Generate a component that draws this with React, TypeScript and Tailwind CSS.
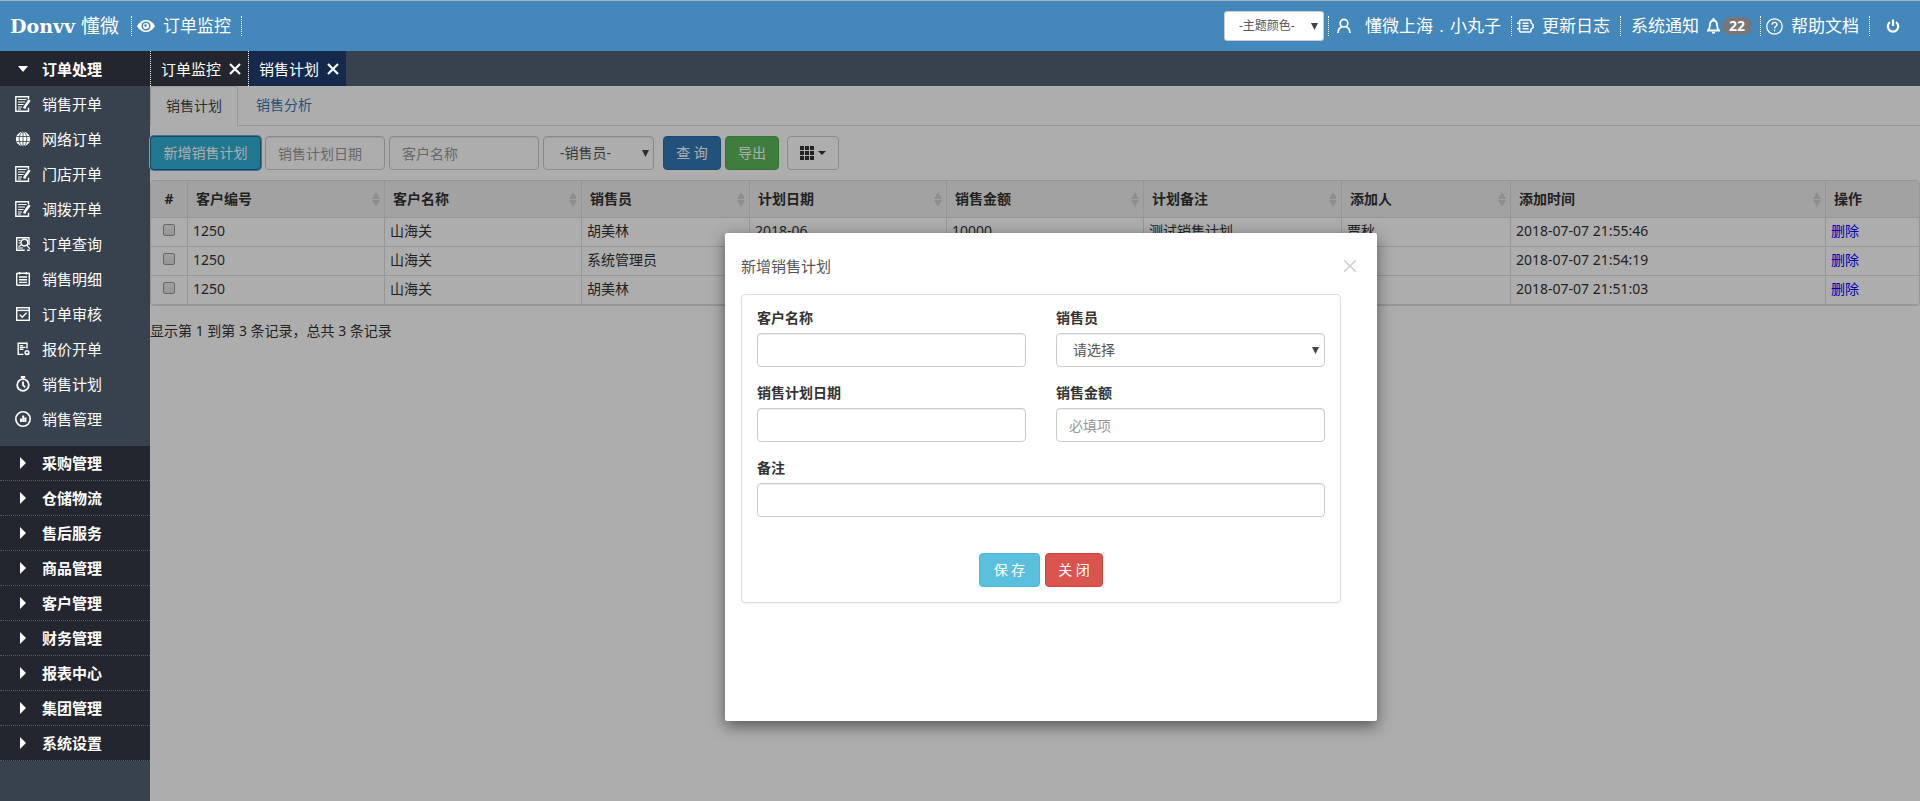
import { useState } from "react";
import type { ReactNode } from "react";
import clsx from "clsx";

type IconName =
  | "edit"
  | "globe"
  | "search"
  | "list"
  | "check"
  | "quote"
  | "timer"
  | "chart";

const MENU: { icon: IconName; label: string }[] = [
  { icon: "edit", label: "销售开单" },
  { icon: "globe", label: "网络订单" },
  { icon: "edit", label: "门店开单" },
  { icon: "edit", label: "调拨开单" },
  { icon: "search", label: "订单查询" },
  { icon: "list", label: "销售明细" },
  { icon: "check", label: "订单审核" },
  { icon: "quote", label: "报价开单" },
  { icon: "timer", label: "销售计划" },
  { icon: "chart", label: "销售管理" },
];

const GROUPS = [
  "采购管理",
  "仓储物流",
  "售后服务",
  "商品管理",
  "客户管理",
  "财务管理",
  "报表中心",
  "集团管理",
  "系统设置",
];

const COLUMNS = [
  { title: "客户编号", width: "w-[197px]" },
  { title: "客户名称", width: "w-[197px]" },
  { title: "销售员", width: "w-[168px]" },
  { title: "计划日期", width: "w-[197px]" },
  { title: "销售金额", width: "w-[197px]" },
  { title: "计划备注", width: "w-[198px]" },
  { title: "添加人", width: "w-[169px]" },
  { title: "添加时间", width: "" },
];

const ROWS = [
  ["1250", "山海关", "胡美林", "2018-06", "10000", "测试销售计划", "贾秋", "2018-07-07 21:55:46"],
  ["1250", "山海关", "系统管理员", "", "", "", "", "2018-07-07 21:54:19"],
  ["1250", "山海关", "胡美林", "", "", "", "", "2018-07-07 21:51:03"],
];

const inputClass =
  "h-[34px] rounded border border-[#ccc] bg-white px-3 text-sm text-[#555] shadow-[inset_0_1px_1px_rgba(0,0,0,0.075)] outline-none placeholder:text-[#999]";

function MenuIcon({ name }: { name: IconName }) {
  const line = { fill: "none", stroke: "currentColor", strokeWidth: 1.4 };
  return (
    <svg width="16" height="16" viewBox="0 0 16 16" className="shrink-0">
      {name === "edit" && (
        <g {...line}>
          <path d="M13.500 3V.8H.8v14.400h12.700v-3.400" />
          <path d="M3 3.500h8.500M3 6h7M3 8.500h5.500M3 11h4M3 13h3" strokeWidth="1.100" />
          <path d="M14.600 4 10 10.600l-.8 2" strokeWidth="2.600" />
        </g>
      )}
      {name === "globe" && (
        <g fill="none" stroke="#37424e" strokeWidth="0.8">
          <circle cx="8" cy="8" r="7.200" fill="#fff" stroke="none" />
          <path d="M8 1v14M1.500 5.500h13M1.500 10.500h13" />
          <ellipse cx="8" cy="8" rx="3.800" ry="7.200" />
        </g>
      )}
      {name === "search" && (
        <g {...line}>
          <path d="M14 9V1.700H1.700v12.600h8M12 14.300h2.800" />
          <circle cx="9.400" cy="6.600" r="3.400" />
          <path d="m11.800 9.200 3 3.600M3.600 4.400h2M3.600 7h2M3.600 10.600 6 9.200M3 12h5" strokeWidth="1.200" />
        </g>
      )}
      {name === "list" && (
        <g {...line}>
          <rect x="1.700" y="2.200" width="12.600" height="12.100" rx=".6" />
          <path d="M4.600 1v2.400M11.400 1v2.400" />
          <path d="M4 6h8M4 8.700h8M4 11.400h8" />
        </g>
      )}
      {name === "check" && (
        <g {...line}>
          <rect x="1.700" y="1.700" width="12.600" height="12.600" />
          <path d="M1.700 4.400h12.600" />
          <path d="m4.800 8.600 2.400 2.600 4.400-4.400" />
        </g>
      )}
      {name === "quote" && (
        <g {...line}>
          <path d="M12 7.400V2.200H3.200v11.200h5.200" />
          <path d="M4.800 4.600h3.400M4.800 6.400h5.800M4.800 8.200h3.600" />
          <circle cx="12" cy="11.600" r="1.900" />
          <path d="M10.600 13.200h3.600" />
        </g>
      )}
      {name === "timer" && (
        <g {...line} strokeWidth="1.800">
          <circle cx="8" cy="9" r="5.800" />
          <path d="M5.800 1h4.400M8 1v2.400M8 5.400V9l2.200 2.400" />
        </g>
      )}
      {name === "chart" && (
        <g {...line} strokeWidth="1.600">
          <circle cx="8" cy="8" r="7.200" />
          <path d="M6 7.400V11M8.200 4.600V11M10.400 6.600V11" strokeWidth="2" />
        </g>
      )}
    </svg>
  );
}

function Arrow({ className }: { className: string }) {
  return (
    <svg width="7" height="7" viewBox="0 0 7 7" className={clsx("pointer-events-none absolute", className)}>
      <path d="M0 0h7L3.500 7z" fill="#444" />
    </svg>
  );
}

function CloseMark({ size, width }: { size: number; width: number }) {
  return (
    <svg width={size} height={size} viewBox="0 0 12 12" fill="none" stroke="currentColor" strokeWidth={width}>
      <path d="m1 1 10 10M11 1 1 11" />
    </svg>
  );
}

function Divider() {
  return <span className="h-5 border-l border-dotted border-white" />;
}

function Header() {
  return (
    <header className="flex h-[51px] shrink-0 items-center border-t border-[#a9b0b6] bg-[#4487bb] text-[17px] leading-5 whitespace-nowrap text-white">
      <a href="#" className="flex items-center gap-[6px] pr-3 pl-[10px]">
        <span className="font-['DejaVu_Serif',serif] text-[19px] leading-5 font-bold">Donvv</span>
        <span className="text-[19px]">懂微</span>
      </a>
      <Divider />
      <a href="#" className="flex items-center gap-2 pr-[10px] pl-[5px]">
        <svg width="18" height="14" viewBox="0 0 18 14">
          <path d="M0 7C2.500 2.800 5.500 1 9 1s6.500 1.800 9 6c-2.500 4.200-5.500 6-9 6S2.500 11.200 0 7z" fill="#fff" />
          <circle cx="9" cy="7" r="3.800" fill="none" stroke="#4487bb" strokeWidth="1.500" />
          <circle cx="8.500" cy="6.500" r="1.200" fill="#4487bb" />
        </svg>
        订单监控
      </a>
      <Divider />

      <div className="relative ml-auto">
        <select
          aria-label="主题颜色"
          className="block h-[30px] w-[100px] appearance-none rounded-[3px] border border-[#ccc] bg-white pl-[14px] text-xs text-[#555] outline-none"
        >
          <option>-主题颜色-</option>
        </select>
        <Arrow className="top-3 right-[6px]" />
      </div>
      <span className="w-1" />
      <Divider />
      <a href="#" className="flex items-center gap-[14px] pr-[10px] pl-2">
        <svg width="14" height="16" viewBox="0 0 14 16" fill="none" stroke="currentColor" strokeWidth="1.700">
          <circle cx="7" cy="5.200" r="3.800" />
          <path d="M1 15c.2-3.400 1.700-5.600 4-6.400M13 15c-.2-3.400-1.700-5.600-4-6.400" />
        </svg>
        懂微上海﹒小丸子
      </a>
      <Divider />
      <a href="#" className="flex items-center gap-2 pr-[10px] pl-[5px]">
        <svg width="17" height="16" viewBox="0 0 17 16" fill="none" stroke="currentColor" strokeWidth="1.500">
          <path d="M2.500 5V3.200c0-.8.500-1.200 1.200-1.200h9.100c.7 0 1.200.4 1.200 1.200V5M2.500 11v1.800c0 .8.500 1.200 1.200 1.200h9.100c.7 0 1.200-.4 1.200-1.200V11" />
          <path d="M5.500 5.200h6M5.500 8h6M5.500 10.800h6M0 5.200h3.500M0 10.800h3.500M2.500 6v4M14 5l2 1.500v3L14 11" />
        </svg>
        更新日志
      </a>
      <Divider />
      <a href="#" className="flex items-center pr-2 pl-[10px]">
        系统通知
        <svg width="13" height="16" viewBox="0 0 13 16" fill="none" stroke="currentColor" strokeWidth="1.800" className="mr-[2px] ml-2">
          <path d="M1 12.500c1.300-1 1.700-2.200 1.900-5C3 4.200 4.400 2.500 6.500 2.500s3.500 1.700 3.600 5c.2 2.800.6 4 1.900 5z" />
          <path d="M6.500 0v2.500M5 14.700h3" />
        </svg>
        <span className="h-[18px] rounded-full bg-[#777] px-[7px] font-['Open_Sans',sans-serif] text-sm leading-[18px] font-bold">22</span>
      </a>
      <Divider />
      <a href="#" className="flex items-center gap-2 pr-[10px] pl-[5px]">
        <svg width="17" height="17" viewBox="0 0 17 17" fill="none" stroke="currentColor" strokeWidth="1.300">
          <circle cx="8.500" cy="8.500" r="7.700" />
          <path d="M6 6.800c0-1.600 1-2.500 2.500-2.500s2.500.9 2.500 2.200c0 1.800-2.400 1.900-2.400 4M8.600 11.800v1.500" />
        </svg>
        帮助文档
      </a>
      <Divider />
      <button type="button" aria-label="退出" className="pr-5 pl-4">
        <svg width="14" height="14" viewBox="0 0 14 14" fill="none" stroke="currentColor" strokeWidth="2.200">
          <path d="M4 3.200a5.200 5.200 0 1 0 6 0M7 .5v6.500" />
        </svg>
      </button>
    </header>
  );
}

function Sidebar() {
  return (
    <nav className="w-[150px] shrink-0 bg-[#37424e] text-[15px] leading-5 text-white">
      <button type="button" className="flex h-[35px] w-full items-center bg-[#23262e] pl-[18px] font-bold">
        <svg width="10" height="6" viewBox="0 0 10 6" className="mr-[14px]">
          <path d="M0 0h10L5 6z" fill="#fff" />
        </svg>
        订单处理
      </button>
      <ul className="pb-[10px]">
        {MENU.map((item) => (
          <li key={item.label}>
            <a href="#" className="flex h-[35px] items-center gap-[11px] pl-[15px]">
              <MenuIcon name={item.icon} />
              {item.label}
            </a>
          </li>
        ))}
      </ul>
      {GROUPS.map((label) => (
        <button
          key={label}
          type="button"
          className="flex h-[35px] w-full items-center border-b border-dotted border-[#555a63] bg-[#23262e] pl-5 font-bold"
        >
          <svg width="6" height="12" viewBox="0 0 6 12" className="mr-4">
            <path d="M0 0l6 6-6 6z" fill="#fff" />
          </svg>
          {label}
        </button>
      ))}
    </nav>
  );
}

function PageTab({ label, active }: { label: string; active?: boolean }) {
  return (
    <div
      className={clsx(
        "flex w-[98px] items-center justify-between border-l border-dotted border-white pr-[7px] pl-[10px]",
        active ? "bg-[#15294c]" : "bg-[#23262e]"
      )}
    >
      <a href="#">{label}</a>
      <button type="button" aria-label={`关闭${label}`}>
        <CloseMark size={12} width={2.2} />
      </button>
    </div>
  );
}

function Toolbar() {
  return (
    <div className="mt-[10px] flex gap-1 text-sm">
      <button
        type="button"
        className="h-[34px] w-[111px] rounded border border-[#1b6d85] bg-[#31b0d5] text-white ring-1 ring-[#6f9ff0]"
      >
        新增销售计划
      </button>
      <input aria-label="销售计划日期" placeholder="销售计划日期" className={clsx(inputClass, "w-[120px]")} />
      <input aria-label="客户名称" placeholder="客户名称" className={clsx(inputClass, "w-[150px]")} />
      <div className="relative">
        <select aria-label="销售员" className={clsx(inputClass, "w-[111px] appearance-none pl-4")}>
          <option>-销售员-</option>
        </select>
        <Arrow className="top-[14px] right-[5px]" />
      </div>
      <button type="button" className="ml-[5px] h-[34px] w-[58px] rounded border border-[#2e6da4] bg-[#337ab7] text-white">
        查 询
      </button>
      <button type="button" className="h-[34px] w-[54px] rounded border border-[#4cae4c] bg-[#5cb85c] text-white">
        导出
      </button>
      <button
        type="button"
        aria-label="显示列"
        className="ml-1 flex h-[34px] w-[52px] items-center justify-center gap-1 rounded border border-[#ccc] bg-white text-[#333]"
      >
        <svg width="14" height="14" viewBox="0 0 14 14" fill="currentColor">
          <path d="M0 0h4v4H0zM5 0h4v4H5zM10 0h4v4h-4zM0 5h4v4H0zM5 5h4v4H5zM10 5h4v4h-4zM0 10h4v4H0zM5 10h4v4H5zM10 10h4v4h-4z" />
        </svg>
        <svg width="8" height="4" viewBox="0 0 8 4" fill="currentColor">
          <path d="M0 0h8L4 4z" />
        </svg>
      </button>
    </div>
  );
}

function PlanTable() {
  return (
    <div className="mt-[10px] overflow-hidden rounded border border-[#ddd]">
      <table className="w-full table-fixed border-separate border-spacing-0 text-left text-sm leading-5 text-[#333]">
        <thead>
          <tr className="bg-[#efefef]">
            <th className="h-[37px] w-[37px] border-r border-b border-[#ddd] text-center">#</th>
            {COLUMNS.map((col) => (
              <th key={col.title} className={clsx("border-r border-b border-[#ddd] pr-1 pl-2", col.width)}>
                <div className="flex items-center justify-between">
                  {col.title}
                  <svg width="8" height="15" viewBox="0 0 8 15" fill="#d2d2d2">
                    <path d="M4 0l4 7H0zM0 8h8l-4 7z" />
                  </svg>
                </div>
              </th>
            ))}
            <th className="w-[93px] border-b border-[#ddd] px-2">操作</th>
          </tr>
        </thead>
        <tbody>
          {ROWS.map((row, i) => (
            <tr key={row[7]}>
              <td className="h-[29px] border-r border-b border-[#ddd]">
                <input
                  type="checkbox"
                  aria-label={`选择第 ${i + 1} 行`}
                  className="mx-auto mb-1 block size-3 appearance-none rounded-[2px] border border-[#999] bg-gradient-to-b from-[#eee] to-[#ddd]"
                />
              </td>
              {row.map((cell, j) => (
                <td key={j} className="border-r border-b border-[#ddd] px-[5px] pb-[2px]">
                  {cell}
                </td>
              ))}
              <td className="border-b border-[#ddd] px-[5px] pb-[2px]">
                <a href="#" className="text-[#0000ff]">
                  删除
                </a>
              </td>
            </tr>
          ))}
        </tbody>
      </table>
    </div>
  );
}

function Field({ id, label, children }: { id: string; label: string; children: ReactNode }) {
  return (
    <div>
      <label htmlFor={id} className="mb-[5px] block leading-5 font-bold text-[#333]">
        {label}
      </label>
      {children}
    </div>
  );
}

function PlanDialog({ onClose }: { onClose: () => void }) {
  return (
    <div
      role="dialog"
      aria-label="新增销售计划"
      className="min-h-[488px] w-[652px] rounded-[2px] bg-white px-4 shadow-[0_5px_15px_rgba(0,0,0,0.5)]"
    >
      <div className="flex h-[61px] items-center justify-between pt-1 pr-1">
        <h2 className="text-[15px] leading-5 text-[#555]">新增销售计划</h2>
        <button type="button" aria-label="关闭" onClick={onClose} className="text-[#ccc]">
          <CloseMark size={14} width={1.2} />
        </button>
      </div>
      <form
        onSubmit={(e) => e.preventDefault()}
        className="mr-5 rounded border border-[#ddd] px-[15px] pt-[13px] pb-[15px] text-sm shadow-[0_1px_1px_rgba(0,0,0,0.05)]"
      >
        <div className="grid grid-cols-2 gap-x-[30px] gap-y-4">
          <Field id="customer" label="客户名称">
            <input id="customer" className={clsx(inputClass, "block w-full")} />
          </Field>
          <Field id="seller" label="销售员">
            <div className="relative">
              <select id="seller" className={clsx(inputClass, "block w-full appearance-none pl-4")}>
                <option>请选择</option>
              </select>
              <Arrow className="top-[14px] right-[6px]" />
            </div>
          </Field>
          <Field id="date" label="销售计划日期">
            <input id="date" className={clsx(inputClass, "block w-full")} />
          </Field>
          <Field id="amount" label="销售金额">
            <input id="amount" placeholder="必填项" className={clsx(inputClass, "block w-full")} />
          </Field>
          <div className="col-span-2">
            <Field id="remark" label="备注">
              <input id="remark" className={clsx(inputClass, "block w-full")} />
            </Field>
          </div>
        </div>
        <div className="mt-9 flex justify-center gap-[5px] text-white">
          <button type="submit" className="h-[34px] w-[61px] rounded border border-[#46b8da] bg-[#5bc0de]">
            保 存
          </button>
          <button type="button" onClick={onClose} className="h-[34px] w-[58px] rounded border border-[#d43f3a] bg-[#d9534f]">
            关 闭
          </button>
        </div>
      </form>
    </div>
  );
}

export default function App() {
  const [open, setOpen] = useState(true);

  return (
    <div className="flex min-h-screen flex-col bg-white font-['Noto_Sans','Noto_Sans_CJK_SC',sans-serif]">
      <Header />
      <div className="flex flex-1">
        <Sidebar />
        <div className="flex min-w-0 flex-1 flex-col">
          <div className="flex h-[35px] shrink-0 bg-[#37424e] text-[15px] leading-5 text-white">
            <PageTab label="订单监控" />
            <PageTab label="销售计划" active />
          </div>

          <main className="relative flex-1">
            <div className="flex h-10 border-b border-[#ddd] text-sm leading-5">
              <a
                href="#"
                className="-mb-px flex items-center rounded-t border border-b-0 border-[#ddd] bg-white px-[15px] pb-[2px] text-[#444]"
              >
                销售计划
              </a>
              <a href="#" className="flex items-center px-[18px] pb-[2px] text-[#337ab7]">
                销售分析
              </a>
            </div>
            <Toolbar />
            <PlanTable />
            <p className="mt-[15px] text-sm leading-5 text-[#333]">显示第 1 到第 3 条记录，总共 3 条记录</p>

            {/* Mask + dialog */}
            {open && (
              <div className="absolute inset-0 flex items-start justify-center bg-black/32 pt-[147px] pl-8">
                <PlanDialog onClose={() => setOpen(false)} />
              </div>
            )}
          </main>
        </div>
      </div>
    </div>
  );
}
